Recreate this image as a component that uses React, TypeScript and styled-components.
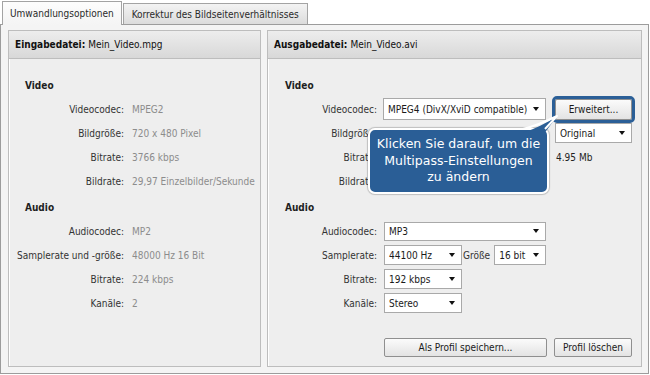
import React from "react";
import styled, { createGlobalStyle, css } from "styled-components";

const Global = createGlobalStyle`
  html, body { margin: 0; padding: 0; background: #ffffff; }
  body {
    font-family: "DejaVu Sans Condensed", "DejaVu Sans", sans-serif;
    font-size: 10px;
    color: #333333;
  }
  * { box-sizing: border-box; }
`;

const Page = styled.div`
  width: 650px;
  height: 375px;
  overflow: hidden;
  background: #ffffff;
`;

const TabBar = styled.div`
  display: flex;
  align-items: flex-end;
  height: 24px;
  padding-left: 2px;
  gap: 1px;
`;

const Tab = styled.div<{ $active?: boolean }>`
  display: flex;
  align-items: center;
  padding: 0 7px;
  border: 1px solid #a3a3a3;
  border-bottom: none;
  color: #2a2a2a;
  white-space: nowrap;
  position: relative;
  ${(p) =>
    p.$active
      ? css`
          height: 24px;
          margin-bottom: -1px;
          z-index: 1;
          padding-bottom: 1px;
          background: linear-gradient(#fdfdfd, #f4f4f4);
        `
      : css`
          height: 21px;
          padding: 0 8px;
          background: linear-gradient(#f3f3f3, #dcdcdc);
        `}
`;

const Frame = styled.div`
  width: 649px;
  height: 350px;
  border: 1px solid #9c9c9c;
  background: #f4f4f4;
  display: flex;
  gap: 6px;
  padding: 5px 6px 6px 7px;
`;

const Panel = styled.div<{ $w: number }>`
  width: ${(p) => p.$w}px;
  flex-shrink: 0;
  border: 1px solid #bdbdbd;
  box-shadow: inset 1px 1px 0 #ffffff;
  background: #eeeeee;
  display: flex;
  flex-direction: column;
  position: relative;
`;

const PanelHeader = styled.div`
  height: 28px;
  display: flex;
  align-items: center;
  padding-left: 6px;
  border-bottom: 1px solid #bdbdbd;
  background: linear-gradient(#ededed, #d8d8d8);
  color: #111111;
  b { font-weight: bold; margin-right: 3px; }
`;

const PanelBody = styled.div`
  flex: 1;
  display: flex;
  flex-direction: column;
  padding: 14px 0 9px;
`;

const SectionTitle = styled.div<{ $indent: number; $gap?: number }>`
  height: 24px;
  display: flex;
  align-items: center;
  padding-left: ${(p) => p.$indent}px;
  margin-top: ${(p) => p.$gap ?? 0}px;
  font-weight: bold;
  color: #1e1e1e;
`;

const Row = styled.div<{ $indent: number }>`
  height: 24px;
  display: flex;
  align-items: center;
  padding-left: ${(p) => p.$indent}px;
`;

const Label = styled.span<{ $w: number; $gap: number }>`
  width: ${(p) => p.$w}px;
  margin-right: ${(p) => p.$gap}px;
  flex-shrink: 0;
  text-align: right;
  white-space: nowrap;
  color: #333333;
`;

const Value = styled.span<{ $dark?: boolean }>`
  color: ${(p) => (p.$dark ? "#222222" : "#8c8c8c")};
  white-space: nowrap;
  padding-left: ${(p) => (p.$dark ? 1 : 0)}px;
`;

const InlineLabel = styled.span`
  margin: 0 4px 0 1px;
  color: #333333;
`;

const Spacer = styled.div<{ $w: number }>`
  width: ${(p) => p.$w}px;
  flex-shrink: 0;
`;

const Select = styled.div<{ $w: number; $h: number; $ml?: number }>`
  width: ${(p) => p.$w}px;
  height: ${(p) => p.$h}px;
  margin-left: ${(p) => p.$ml ?? 0}px;
  flex-shrink: 0;
  display: flex;
  align-items: center;
  padding-left: 4px;
  background: #ffffff;
  border: 1px solid #a9a9a9;
  color: #1a1a1a;
  white-space: nowrap;
  &::after {
    content: "";
    margin-left: auto;
    margin-right: 6px;
    border-left: 3.5px solid transparent;
    border-right: 3.5px solid transparent;
    border-top: 4px solid #111111;
  }
`;

const Button = styled.div<{ $w: number; $h: number; $ml?: number; $highlight?: boolean }>`
  width: ${(p) => p.$w}px;
  height: ${(p) => p.$h}px;
  margin-left: ${(p) => p.$ml ?? 0}px;
  flex-shrink: 0;
  display: flex;
  align-items: center;
  justify-content: center;
  border: 1px solid #8f8f8f;
  border-radius: 2px;
  background: linear-gradient(#fbfbfb, #e3e3e3);
  color: #1a1a1a;
  white-space: nowrap;
  ${(p) =>
    p.$highlight &&
    css`
      outline: 3px solid #2b5f97;
      outline-offset: 0;
    `}
`;

const ButtonRow = styled.div`
  margin-top: auto;
  display: flex;
  gap: 7px;
  padding-left: 116px;
`;

const Tooltip = styled.div`
  position: absolute;
  left: 100px;
  top: 97px;
  width: 181px;
  height: 66px;
  border: 2px solid #ffffff;
  border-radius: 7px;
  background: #2a5e96;
  box-shadow: 0 0 1px 1px rgba(0, 0, 0, 0.2);
  color: #ffffff;
  font-family: "DejaVu Sans", sans-serif;
  font-size: 12.5px;
  line-height: 16.5px;
  text-align: center;
  padding-top: 6px;
  z-index: 2;
`;

const TailSvg = styled.svg`
  position: absolute;
  left: 248px;
  top: 78px;
  z-index: 3;
  overflow: visible;
`;

const InfoRow = ({ label, value }: { label: string; value: string }) => (
  <Row $indent={8}>
    <Label $w={107} $gap={8}>{label}</Label>
    <Value>{value}</Value>
  </Row>
);

export default function App() {
  return (
    <Page>
      <Global />
      <TabBar>
        <Tab $active>Umwandlungsoptionen</Tab>
        <Tab>Korrektur des Bildseitenverhältnisses</Tab>
      </TabBar>
      <Frame>
        <Panel $w={253}>
          <PanelHeader>
            <b>Eingabedatei:</b>Mein_Video.mpg
          </PanelHeader>
          <PanelBody>
            <SectionTitle $indent={16}>Video</SectionTitle>
            <InfoRow label="Videocodec:" value="MPEG2" />
            <InfoRow label="Bildgröße:" value="720 x 480 Pixel" />
            <InfoRow label="Bitrate:" value="3766 kbps" />
            <InfoRow label="Bildrate:" value="29,97 Einzelbilder/Sekunde" />
            <SectionTitle $indent={16} $gap={2}>Audio</SectionTitle>
            <InfoRow label="Audiocodec:" value="MP2" />
            <InfoRow label="Samplerate und -größe:" value="48000 Hz 16 Bit" />
            <InfoRow label="Bitrate:" value="224 kbps" />
            <InfoRow label="Kanäle:" value="2" />
          </PanelBody>
        </Panel>
        <Panel $w={375}>
          <PanelHeader>
            <b>Ausgabedatei:</b>Mein_Video.avi
          </PanelHeader>
          <PanelBody>
            <SectionTitle $indent={17}>Video</SectionTitle>
            <Row $indent={8}>
              <Label $w={101} $gap={6}>Videocodec:</Label>
              <Select $w={163} $h={22}>MPEG4 (DivX/XviD compatible)</Select>
              <Button $w={77} $h={21} $ml={9} $highlight>Erweitert...</Button>
            </Row>
            <Row $indent={8}>
              <Label $w={101} $gap={6}>Bildgröße:</Label>
              <Spacer $w={163} />
              <Select $w={77} $h={20} $ml={9}>Original</Select>
            </Row>
            <Row $indent={8}>
              <Label $w={101} $gap={6}>Bitrate:</Label>
              <Spacer $w={172} />
              <Value $dark>4.95 Mb</Value>
            </Row>
            <Row $indent={8}>
              <Label $w={101} $gap={6}>Bildrate:</Label>
            </Row>
            <SectionTitle $indent={17} $gap={2}>Audio</SectionTitle>
            <Row $indent={8}>
              <Label $w={101} $gap={7}>Audiocodec:</Label>
              <Select $w={162} $h={19}>MP3</Select>
            </Row>
            <Row $indent={8}>
              <Label $w={101} $gap={7}>Samplerate:</Label>
              <Select $w={78} $h={20}>44100 Hz</Select>
              <InlineLabel>Größe</InlineLabel>
              <Select $w={52} $h={20}>16 bit</Select>
            </Row>
            <Row $indent={8}>
              <Label $w={101} $gap={7}>Bitrate:</Label>
              <Select $w={78} $h={20}>192 kbps</Select>
            </Row>
            <Row $indent={8}>
              <Label $w={101} $gap={7}>Kanäle:</Label>
              <Select $w={78} $h={20}>Stereo</Select>
            </Row>
            <ButtonRow>
              <Button $w={163} $h={19}>Als Profil speichern...</Button>
              <Button $w={78} $h={19}>Profil löschen</Button>
            </ButtonRow>
          </PanelBody>
          <Tooltip>
            Klicken Sie darauf, um die
            <br />
            Multipass-Einstellungen
            <br />
            zu ändern
          </Tooltip>
          <TailSvg width="45" height="24" viewBox="0 0 45 24">
            <path d="M7,23.5 C19,20 31,14 41,7 L29,23.5 Z" fill="#2a5e96" />
            <path
              d="M7,20 C19,17 31,12 41,7 L29,20"
              fill="none"
              stroke="#ffffff"
              strokeWidth="2"
              strokeLinejoin="round"
            />
          </TailSvg>
        </Panel>
      </Frame>
    </Page>
  );
}
